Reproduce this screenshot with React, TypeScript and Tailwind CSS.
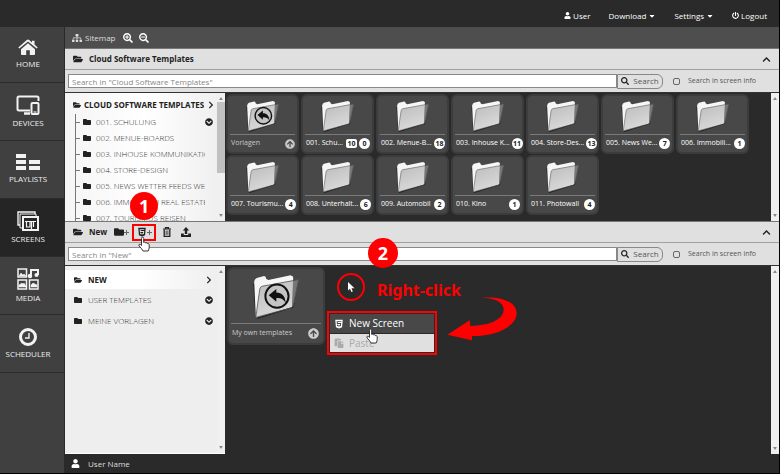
import React, { useId } from "react";
import {
  FaArrowCircleUp,
  FaCaretDown,
  FaChevronCircleDown,
  FaChevronRight,
  FaChevronUp,
  FaFolder,
  FaFolderOpen,
  FaHtml5,
  FaPaste,
  FaPowerOff,
  FaSearch,
  FaSearchMinus,
  FaSearchPlus,
  FaSitemap,
  FaUser,
} from "react-icons/fa";

interface FolderItem {
  name: string;
  count?: number;
  folders?: number;
}

const folders: FolderItem[] = [
  { name: "Vorlagen" },
  { name: "001. Schu...", folders: 10, count: 0 },
  { name: "002. Menue-B...", count: 18 },
  { name: "003. Inhouse K...", count: 11 },
  { name: "004. Store-Des...", count: 13 },
  { name: "005. News We...", count: 7 },
  { name: "006. Immobili...", count: 1 },
  { name: "007. Tourismu...", count: 4 },
  { name: "008. Unterhalt...", count: 6 },
  { name: "009. Automobil", count: 2 },
  { name: "010. Kino", count: 1 },
  { name: "011. Photowall", count: 4 },
];

const tree = [
  "001. SCHULUNG",
  "002. MENUE-BOARDS",
  "003. INHOUSE KOMMUNIKATION",
  "004. STORE-DESIGN",
  "005. NEWS WETTER FEEDS WEB",
  "006. IMMOBILIEN REAL ESTATE",
  "007. TOURISMUS REISEN",
];

function HomeIcon() {
  return (
    <svg width="20" height="17" viewBox="0 0 20 17" fill="#f2f2f2">
      <path d="M10 4.200l7 6V15q0 1-1 1h-4.200v-4.800H8.200V16H4q-1 0-1-1v-4.800z" />
      <path d="M10 .6q.6 0 1.200.5L14 3.500V1.800h2.500v3.800l3.200 2.800-1 1.200L10 2.600 1.300 9.600l-1-1.200L8.800 1.100Q9.400.6 10 .6z" />
    </svg>
  );
}

function DevicesIcon() {
  return (
    <svg width="24" height="20" viewBox="0 0 24 20" fill="none" stroke="#f2f2f2" strokeWidth="2">
      <path d="M22.500 6V3q0-1.500-1.500-1.500H3Q1.500 1.500 1.500 3v11q0 1.500 1.500 1.500h11" />
      <path d="M8 18.500h6" strokeWidth="2.500" />
      <rect x="15.500" y="8" width="7" height="11" rx="1" fill="#404040" />
      <path d="M17.500 17h3" strokeWidth="1.200" />
    </svg>
  );
}

function PlaylistsIcon() {
  return (
    <svg width="24" height="17" viewBox="0 0 24 17" fill="#f2f2f2">
      <rect x="0" y="0" width="10" height="4" />
      <rect x="0" y="6" width="10" height="4" />
      <rect x="0" y="12" width="10" height="4" />
      <rect x="13" y="6" width="11" height="4" />
      <rect x="13" y="12" width="11" height="4" />
    </svg>
  );
}

function ScreensIcon() {
  return (
    <svg width="22" height="20" viewBox="0 0 22 20" fill="none" stroke="#f2f2f2" strokeWidth="1.4">
      <path d="M3 14H1V1h17v2" />
      <path d="M5 17H3V3h16v2" strokeWidth="1" />
      <rect x="6" y="6" width="15" height="13" strokeWidth="2" fill="#252525" />
      <path d="M8 10.500h11M14.500 10v8M9.500 10.500h3.500v5.500h-3.500zM16.500 11v5" strokeWidth="1.200" />
    </svg>
  );
}

function MediaIcon() {
  return (
    <svg width="22" height="22" viewBox="0 0 22 22" fill="none" stroke="#f2f2f2" strokeWidth="1.5">
      <rect x="1" y="1" width="8.500" height="8" />
      <path d="M2 8l2-3 2 2 1-1 2 2z" fill="#f2f2f2" strokeWidth="0.500" />
      <path d="M14 8V2h7v5" strokeWidth="2" />
      <circle cx="13" cy="8" r="1.500" fill="#f2f2f2" />
      <circle cx="19.500" cy="7" r="1.300" fill="#f2f2f2" />
      <rect x="1" y="12" width="8.500" height="9" />
      <path d="M2 19v-2l3-2 1 1 1-1 2 3v1z" fill="#f2f2f2" strokeWidth="0.500" />
      <rect x="12.500" y="12" width="8.500" height="9" />
      <path d="M14 19v-2l2-2 2 1 2 1v2z" fill="#f2f2f2" strokeWidth="0.500" />
    </svg>
  );
}

function ClockIcon() {
  return (
    <svg width="18" height="18" viewBox="0 0 18 18" fill="none" stroke="#f2f2f2">
      <circle cx="9" cy="9" r="7.500" strokeWidth="3" />
      <path d="M10 5v5H6" strokeWidth="1.400" />
    </svg>
  );
}

function TrashIcon() {
  return (
    <svg width="8" height="10" viewBox="0 0 8 10" fill="none" stroke="#222">
      <path d="M0 2h8M2.500 1.500V.6h3v.9" strokeWidth="1.200" />
      <path d="M1.200 2.500v6.800h5.600V2.500" strokeWidth="1.300" />
      <path d="M3 3.500V8M4 3.500V8M5 3.500V8" strokeWidth=".6" />
    </svg>
  );
}

function UploadIcon() {
  return (
    <svg width="10" height="10" viewBox="0 0 10 10" fill="#222">
      <path d="M5 0l3.200 3.600H6.200V7H3.800V3.600H1.800z" />
      <path d="M0 6.500h2.800V8h4.400V6.500H10V10H0z" />
    </svg>
  );
}

function PlusIcon() {
  return (
    <svg width="5" height="5" viewBox="0 0 5 5" stroke="#666">
      <path d="M2.500 0v5M0 2.500h5" />
    </svg>
  );
}

function FolderArt({ className, back = false }: { className: string; back?: boolean }) {
  const id = useId();
  return (
    <svg className={className} viewBox="-3 -3 141 136" aria-hidden="true">
      <defs>
        <linearGradient id={id} x1="0" y1="0" x2="0.4" y2="1">
          <stop offset="0" stopColor="#bcbcbc" />
          <stop offset="1" stopColor="#dadada" />
        </linearGradient>
      </defs>
      <path d="M-3 26L4 127l6 6 108-34 4-14z" fill="#222" />
      <path d="M0 20Q2 11 8 9L30 3q5 0 7 9l6 3 67-14 8 4-2 90L5 127z" fill="#f6f6f6" />
      <path d="M116 18l18-4-16 78-6 6z" fill="#777" />
      <path d="M17 42q1-6 7-8l93-17-3 80L6 129z" fill={`url(#${id})`} />
      <path
        d="M5 128L17 42q1-6 7-8L134 14l-16 78q-2 6-8 8z"
        fill="none"
        stroke="#555"
        strokeWidth="2.500"
      />
      {back && (
        <>
          <circle cx="69" cy="64" r="35" fill="#c4c4c4" stroke="#111" strokeWidth="6" />
          <path d="M44 61l23-19v11c17 0 27 11 28 31-7-11-15-15-28-14v11z" fill="#111" />
        </>
      )}
    </svg>
  );
}

function ScrollBar({ thumb = false }: { thumb?: boolean }) {
  return (
    <div className="flex w-2 shrink-0 flex-col items-center justify-between bg-[#f0f0f0] pt-1 pb-1">
      <svg width="4" height="3" viewBox="0 0 4 3" fill="#888">
        <path d="M0 3l2-3 2 3z" />
      </svg>
      {thumb && <div className="mt-0.5 mb-auto h-[71px] w-2 bg-[#c1c1c1]" />}
      <svg width="4" height="3" viewBox="0 0 4 3" fill="#888">
        <path d="M0 0l2 3 2-3z" />
      </svg>
    </div>
  );
}

function FolderCard({ item, back }: { item: FolderItem; back?: boolean }) {
  return (
    <div className="flex h-[60px] w-[73px] flex-col rounded-md border-2 border-[#3c3c3c] bg-[#484848] px-0.5">
      <div className="flex h-[39px] items-center justify-center border-b border-[#7a7a7a] pt-px">
        <FolderArt className="h-8 w-[34px]" back={back} />
      </div>
      <div className="flex h-[17px] items-center gap-0.5 pl-px text-[7px]">
        <span
          className={
            back ? "flex-1 whitespace-nowrap text-[#c8c8c8]" : "flex-1 whitespace-nowrap text-white"
          }
        >
          {item.name}
        </span>
        {item.folders !== undefined && (
          <span className="flex h-[9px] w-[11px] items-center justify-center rounded-xs bg-white leading-[9px] font-bold text-[#222]">
            {item.folders}
          </span>
        )}
        {back ? (
          <FaArrowCircleUp className="size-2.5 text-[#c8c8c8]" />
        ) : (
          <span className="flex size-[11px] shrink-0 items-center justify-center rounded-full bg-white leading-[9px] font-bold text-[#222]">
            {item.count}
          </span>
        )}
      </div>
    </div>
  );
}

function SearchRow({ id, placeholder }: { id: string; placeholder: string }) {
  return (
    <form className="flex h-[23px] items-center border-t border-[#a0a0a0] bg-[#e0e0e0] pr-[22px] pl-[3px] text-[8px] text-[#555]">
      <input
        type="text"
        aria-label={placeholder}
        placeholder={placeholder}
        className="h-[14px] min-w-0 flex-1 border border-[#888] bg-white px-[3px] leading-3 placeholder:text-[#888]"
      />
      <button
        type="button"
        className="flex h-[15px] w-[46px] items-center justify-center gap-1 rounded-r-md border border-[#888] bg-[#e0e0e0]"
      >
        <FaSearch className="size-2 text-[#222]" />
        Search
      </button>
      <input
        id={id}
        type="checkbox"
        className="ml-2.5 size-[7px] appearance-none rounded-xs border border-[#666]"
      />
      <label htmlFor={id} className="ml-2 w-[69px] text-[7px] whitespace-nowrap">
        Search in screen info
      </label>
    </form>
  );
}

function HandCursor({ className }: { className: string }) {
  return (
    <svg className={className} viewBox="0 0 12 15" fill="#fff" stroke="#222" strokeWidth="0.900">
      <path d="M3.500 9V1.800Q3.600.6 4.600.6T5.700 1.800V6q.5-.8 1.500-.2l.3.600q.8-.7 1.600.2l.2.500q1.500-.4 1.900 1V11q0 1.500-1 3.500H5Q4 12.500 1.200 9.500.4 8.300 1.400 7.700q1-.4 2.100 1.300z" />
    </svg>
  );
}

function NavItem({
  label,
  icon,
  active = false,
  first = false,
}: {
  label: string;
  icon: React.ReactNode;
  active?: boolean;
  first?: boolean;
}) {
  return (
    <a
      href="#"
      className={`flex flex-col items-center justify-center gap-0.5 border-b border-[#2c2c2c] pr-2 leading-3 text-[#eee] ${
        first ? "h-14" : "h-[58px]"
      } ${active ? "bg-[#252525]" : ""}`}
    >
      {icon}
      {label}
    </a>
  );
}

export default function App() {
  return (
    <div className="flex min-h-screen flex-col border-r border-b border-black bg-[#2a2a2a] font-['Open_Sans',sans-serif] text-[8px]">
      <header className="flex h-[27px] items-center justify-end gap-[18px] pt-1 pr-3 text-white">
        <a href="#" className="flex items-center gap-0.5">
          <FaUser className="size-[7px]" /> User
        </a>
        <button type="button" className="flex items-center gap-0.5">
          Download <FaCaretDown className="size-2" />
        </button>
        <button type="button" className="flex items-center gap-0.5">
          Settings <FaCaretDown className="size-2" />
        </button>
        <a href="#" className="flex items-center gap-0.5">
          <FaPowerOff className="size-[7px]" /> Logout
        </a>
      </header>

      <div className="flex flex-1">
        {/* Main navigation */}
        <nav className="w-16 shrink-0 bg-[#404040]">
          <NavItem first label="HOME" icon={<HomeIcon />} />
          <NavItem label="DEVICES" icon={<DevicesIcon />} />
          <NavItem label="PLAYLISTS" icon={<PlaylistsIcon />} />
          <NavItem active label="SCREENS" icon={<ScreensIcon />} />
          <NavItem label="MEDIA" icon={<MediaIcon />} />
          <NavItem label="SCHEDULER" icon={<ClockIcon />} />
        </nav>

        <main className="flex min-w-0 flex-1 flex-col border-l border-[#2a2a2a]">
          <div className="flex h-[21px] items-center bg-[#4e4e4e] pl-[7px] text-[#ddd]">
            <a href="#" className="flex items-center gap-[3px]">
              <FaSitemap className="size-2.5" /> Sitemap
            </a>
            <button type="button" aria-label="Zoom in" className="ml-[7px]">
              <FaSearchPlus className="size-2.5 text-white" />
            </button>
            <button type="button" aria-label="Zoom out" className="ml-1.5">
              <FaSearchMinus className="size-2.5 text-white" />
            </button>
          </div>

          {/* Cloud templates panel */}
          <div className="flex h-[21px] items-center border-t border-[#777] bg-[#e0e0e0] px-2 text-[#222]">
            <FaFolderOpen className="size-2.5" />
            <h2 className="ml-1.5 flex-1 font-bold">Cloud Software Templates</h2>
            <button type="button" aria-label="Collapse">
              <FaChevronUp className="size-[9px]" />
            </button>
          </div>
          <SearchRow id="info-cloud" placeholder={'Search in "Cloud Software Templates"'} />
          <div className="flex h-[129px] border-t border-[#333]">
            <aside className="flex w-40 shrink-0 bg-linear-to-r from-[#f5f5f5] via-white to-[#eee]">
              <div className="h-32 min-w-0 flex-1 overflow-hidden pt-0.5 pr-1 pl-2 text-[#222]">
                <div className="flex h-[19px] items-center gap-[3px]">
                  <FaFolderOpen className="size-2 shrink-0" />
                  <strong className="flex-1 whitespace-nowrap">CLOUD SOFTWARE TEMPLATES</strong>
                  <FaChevronRight className="size-2 shrink-0" />
                </div>
                <ul className="ml-0.5 border-l border-[#777]">
                  {tree.map((name, i) => (
                    <li key={name} className="flex h-4 items-center">
                      <span className="mr-[3px] h-px w-1 shrink-0 bg-[#777]" />
                      <FaFolder className="size-2 shrink-0" />
                      <span className="ml-[5px] flex-1 overflow-hidden font-light whitespace-nowrap text-[#333]">
                        {name}
                      </span>
                      <span className="w-2 shrink-0">
                        {i === 0 && <FaChevronCircleDown className="size-2" />}
                      </span>
                    </li>
                  ))}
                </ul>
              </div>
              <ScrollBar thumb />
            </aside>
            <div className="flex flex-1 flex-wrap content-start gap-x-0.5 gap-y-px pt-px pl-px">
              {folders.map((item, i) => (
                <FolderCard key={item.name} item={item} back={i === 0} />
              ))}
            </div>
            <ScrollBar />
          </div>

          {/* New screens panel */}
          <div className="flex h-[21px] items-center border-t border-[#777] bg-[#e0e0e0] px-2 text-[#222]">
            <FaFolderOpen className="size-2.5" />
            <h2 className="ml-1.5 font-bold">New</h2>
            <button type="button" aria-label="New folder" className="ml-[7px] flex items-center">
              <FaFolder className="size-2.5" />
              <PlusIcon />
            </button>
            <div className="relative ml-[3px]">
              <button
                type="button"
                aria-label="New screen"
                className="flex h-[17px] w-6 items-center justify-center border-2 border-[#f00]"
              >
                <FaHtml5 className="size-2.5" />
                <PlusIcon />
              </button>
              <span className="absolute -top-8 -left-0.5 flex size-7 items-center justify-center rounded-full bg-[#f00] font-['Noto_Sans',sans-serif] text-lg font-bold text-white">
                1
              </span>
              <HandCursor className="absolute top-3 left-1.5 z-10 h-4 w-3" />
            </div>
            <button type="button" aria-label="Delete" className="ml-[7px]">
              <TrashIcon />
            </button>
            <button type="button" aria-label="Upload" className="mr-auto ml-2.5">
              <UploadIcon />
            </button>
            <button type="button" aria-label="Collapse">
              <FaChevronUp className="size-[9px]" />
            </button>
          </div>
          <SearchRow id="info-new" placeholder={'Search in "New"'} />
          <div className="flex flex-1 border-t border-[#333]">
            <aside className="flex w-40 shrink-0 border-b border-white bg-[#eee]">
              <ul className="flex-1 pt-1 text-[#222]">
                <li className="flex h-[19px] items-center bg-linear-to-r from-white via-white to-[#eee] pr-1 pl-[9px]">
                  <FaFolderOpen className="size-2" />
                  <strong className="ml-1.5 flex-1">NEW</strong>
                  <FaChevronRight className="size-2" />
                </li>
                {["USER TEMPLATES", "MEINE VORLAGEN"].map((name) => (
                  <li key={name} className="flex h-[21px] items-center pr-1 pl-[9px]">
                    <FaFolder className="size-2" />
                    <span className="ml-1.5 flex-1 font-light text-[#333]">{name}</span>
                    <FaChevronCircleDown className="size-2" />
                  </li>
                ))}
              </ul>
              <ScrollBar />
            </aside>

            <div className="relative flex-1 pt-px pl-0.5">
              <div className="flex h-[78px] w-[98px] flex-col rounded-md border-2 border-[#3c3c3c] bg-[#484848] px-0.5">
                <div className="flex h-[55px] items-center justify-center border-b border-[#7a7a7a]">
                  <FolderArt className="h-[45px] w-[47px]" back />
                </div>
                <div className="flex flex-1 items-center pr-0.5 pl-px text-[7px] text-[#ccc]">
                  <span className="flex-1">My own templates</span>
                  <FaArrowCircleUp className="size-[11px]" />
                </div>
              </div>

              {/* Step two callouts */}
              <span className="absolute -top-7 left-[143px] flex size-[30px] items-center justify-center rounded-full bg-[#f00] font-['Noto_Sans',sans-serif] text-lg font-bold text-white">
                2
              </span>
              <div className="absolute top-[7px] left-[112px] flex size-7 items-center justify-center rounded-full border-2 border-[#f00]">
                <svg width="7" height="10" viewBox="0 0 7 10" fill="#fff">
                  <path d="M0 0v8.500l2-1.800L3.400 10l1.400-.6-1.300-3.100H6.500z" />
                </svg>
              </div>
              <p className="absolute top-3 left-[152px] font-['Noto_Sans',sans-serif] text-base leading-6 font-bold whitespace-nowrap text-[#f00]">
                Right-click
              </p>
              <svg className="absolute top-[30px] left-[222px]" width="72" height="46" viewBox="0 0 216 138" fill="#f00">
                <path d="M103 5c65-5 106 15 106 47 0 38-60 69-134 68v13L1 116l67-43 2 17c60-1 100-20 100-50 0-20-25-35-67-35z" />
              </svg>
              <div className="absolute top-[45px] left-[102px] w-[110px] border-2 border-[#f00] bg-[#2a2a2a] p-px text-[10px]">
                <button type="button" className="flex h-[19px] w-full items-center gap-[5px] bg-[#484848] pl-1 text-white">
                  <FaHtml5 className="size-2.5" /> New Screen
                </button>
                <button
                  type="button"
                  disabled
                  className="flex h-[19px] w-full items-center gap-[5px] border-t border-[#2a2a2a] bg-[#e0e0e0] pl-1 text-[#aaa]"
                >
                  <FaPaste className="size-2.5" /> Paste
                </button>
                <HandCursor className="absolute top-[15px] left-[37px] h-4 w-3" />
              </div>
            </div>
            <ScrollBar />
          </div>

          <footer className="flex h-[19px] items-center gap-2 pl-1.5 text-[#ddd]">
            <FaUser className="size-[9px] text-white" /> User Name
          </footer>
        </main>
      </div>
    </div>
  );
}
